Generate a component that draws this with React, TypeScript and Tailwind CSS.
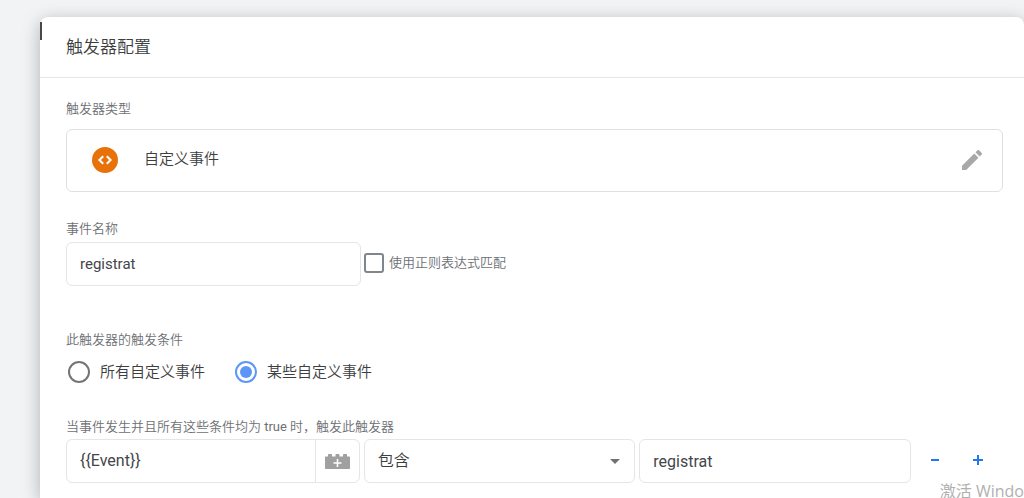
import { useState } from "react";

const labelText = "text-[13px] leading-5 font-[350] text-[#6d7074]";
const fieldBox = "h-11 rounded-md border border-[#e4e5e6]";

function CodeBadge() {
  return (
    <svg viewBox="0 0 26 26" className="size-[26px] shrink-0" aria-hidden="true">
      <circle cx="13" cy="13" r="13" fill="#e8710a" />
      <path
        d="M11.200 9.200 7.400 13l3.800 3.800M14.800 9.200l3.800 3.800-3.800 3.800"
        fill="none"
        stroke="#fff"
        strokeWidth="2"
      />
    </svg>
  );
}

function PencilIcon() {
  return (
    <svg viewBox="3 3 18 18" className="size-5" fill="#a8a8a8" aria-hidden="true">
      <path d="M3 17.25V21h3.75L17.81 9.94l-3.75-3.75L3 17.25zM20.71 7.04a1 1 0 0 0 0-1.41l-2.34-2.34a1 1 0 0 0-1.41 0l-1.83 1.83 3.75 3.75 1.83-1.83z" />
    </svg>
  );
}

function BrickIcon() {
  return (
    <svg viewBox="0 0 25 16" className="h-4 w-[25px]" aria-hidden="true">
      <path
        d="M0 4.500c0-.6.400-1 1-1h2V2c0-.6.400-1 1-1h2c.6 0 1 .4 1 1v1.500h3.500V2c0-.6.400-1 1-1h2c.6 0 1 .4 1 1v1.500H18V2c0-.6.400-1 1-1h2c.6 0 1 .4 1 1v1.500h2c.6 0 1 .4 1 1V15c0 .6-.4 1-1 1H1c-.6 0-1-.4-1-1z"
        fill="#a0a0a0"
      />
      <path d="M12.500 6v8M8.500 10h8" stroke="#fff" strokeWidth="1.600" />
    </svg>
  );
}

function RadioOption(props: { id: string; text: string; checked: boolean; onPick: () => void }) {
  return (
    <label
      htmlFor={props.id}
      className="flex items-center gap-[10px] text-[15px] leading-6 font-[350] text-[#3c3e40]"
    >
      <input
        id={props.id}
        type="radio"
        name="scope"
        checked={props.checked}
        onChange={props.onPick}
        className="grid size-[22px] appearance-none place-items-center rounded-full border-2 border-[#757575] before:size-3 before:rounded-full checked:border-[#5c97f8] checked:before:bg-[#5c97f8]"
      />
      {props.text}
    </label>
  );
}

export default function App() {
  const [scope, setScope] = useState("some");
  return (
    <div className="relative flex min-h-screen flex-col overflow-hidden bg-[#f1f3f4] pt-[17px] pl-10 font-['Roboto','Noto_Sans_CJK_SC',sans-serif]">
      <div className="absolute top-[22px] left-10 z-10 h-[18px] w-[2px] bg-[#46484a]" />
      <main className="flex-1 rounded-t-lg bg-white shadow-[0_4px_18px_rgba(0,0,0,0.27)]">
        <header className="border-b border-[#e4e5e6] px-[26px] py-4">
          <h1 className="text-[17px] leading-7 font-[350] text-[#3c3e40]">触发器配置</h1>
        </header>

        <div className="pr-[21px] pb-3 pl-[26px]">
          <section className="pt-[21px]">
            <h2 className={labelText}>触发器类型</h2>
            <div className="mt-[10px] flex h-[63px] items-center rounded-md border border-[#dfe0e1] pr-5 pb-[2px] pl-[25px]">
              <CodeBadge />
              <span className="ml-[26px] flex-1 pb-[2px] text-[15px] leading-6 font-[350] text-[#3c3e40]">自定义事件</span>
              <button type="button" aria-label="编辑" className="flex">
                <PencilIcon />
              </button>
            </div>
          </section>

          <section className="pt-[27px]">
            <label htmlFor="event-name" className={labelText + " block"}>
              事件名称
            </label>
            <div className="mt-[3px] flex items-center gap-[3px]">
              <input
                id="event-name"
                type="text"
                defaultValue="registrat"
                className={fieldBox + " w-[295px] px-[13px] text-[15px] text-[#444649]"}
              />
              <label htmlFor="regex" className={labelText + " flex items-center gap-[5px] pb-[2px]"}>
                <input
                  id="regex"
                  type="checkbox"
                  className="size-5 appearance-none rounded-[3px] border-2 border-[#80868b] checked:bg-[#5c97f8]"
                />
                使用正则表达式匹配
              </label>
            </div>
          </section>

          <section className="pt-11">
            <h2 className={labelText}>此触发器的触发条件</h2>
            <div className="mt-[10px] flex gap-[30px] pl-[2px]">
              <RadioOption id="scope-all" text="所有自定义事件" checked={scope === "all"} onPick={() => setScope("all")} />
              <RadioOption id="scope-some" text="某些自定义事件" checked={scope === "some"} onPick={() => setScope("some")} />
            </div>
          </section>

          <section className="pt-[33px]">
            <h2 className={labelText}>
              当事件发生并且所有这些条件均为 <span className="font-normal">true</span> 时，触发此触发器
            </h2>
            <div className="mt-[2px] grid grid-cols-[294fr_272fr_272fr_88px] items-center gap-1">
              <div className={fieldBox + " flex"}>
                <input
                  type="text"
                  aria-label="变量"
                  defaultValue="{{Event}}"
                  className="min-w-0 flex-1 px-[13px] text-[16px] text-[#444649]"
                />
                <button
                  type="button"
                  aria-label="插入变量"
                  className="flex w-11 items-center justify-center border-l border-[#e4e5e6]"
                >
                  <BrickIcon />
                </button>
              </div>
              <div className="relative">
                <select
                  aria-label="运算符"
                  defaultValue="contains"
                  className={fieldBox + " block w-full appearance-none bg-white px-[13px] text-[16px] font-[350] text-[#3c3e40]"}
                >
                  <option value="contains">包含</option>
                </select>
                <svg
                  viewBox="0 0 10 5"
                  className="pointer-events-none absolute top-5 right-[15px] h-[5px] w-[10px]"
                  aria-hidden="true"
                >
                  <path d="M0 0h10L5 5z" fill="#6f7275" />
                </svg>
              </div>
              <input
                type="text"
                aria-label="值"
                defaultValue="registrat"
                className={fieldBox + " w-full px-[13px] text-[16px] text-[#444649]"}
              />
              <div className="flex gap-[3px] pb-[2px]">
                <button type="button" aria-label="移除条件" className="flex size-10 items-center justify-center">
                  <svg viewBox="0 0 10 10" className="size-[10px]" aria-hidden="true">
                    <path d="M1 5h8" stroke="#1f78f0" strokeWidth="2" />
                  </svg>
                </button>
                <button type="button" aria-label="添加条件" className="flex size-10 items-center justify-center">
                  <svg viewBox="0 0 10 10" className="size-[10px]" aria-hidden="true">
                    <path d="M0 5h10M5 0v10" stroke="#1f78f0" strokeWidth="2" />
                  </svg>
                </button>
              </div>
            </div>
          </section>
        </div>
      </main>
      <div className="pointer-events-none absolute right-0 bottom-0 font-['Open_Sans','Noto_Sans_CJK_SC',sans-serif] text-[16px] leading-[14px] whitespace-nowrap text-[#b0b0b0]">
        激活 Windo
      </div>
    </div>
  );
}
